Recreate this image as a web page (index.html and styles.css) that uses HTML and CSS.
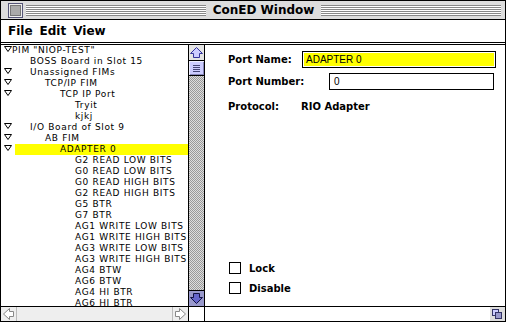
FILE: index.html
```html
<!DOCTYPE html>
<html>
<head>
<meta charset="utf-8">
<title>ConED Window</title>
<link rel="stylesheet" href="styles.css">
</head>
<body>
<div class="window">
  <div class="titlebar">
    <div class="closebox"><div class="closebox-in"></div></div>
    <div class="stripes"></div>
    <div class="title">ConED Window</div>
    <div class="stripes"></div>
  </div>
  <div class="menubar">
    <span class="menu">File</span><span class="menu">Edit</span><span class="menu">View</span>
  </div>
  <div class="main">
    <div class="left">
      <div class="tree-area">
        <div class="tree">
          <div class="row"><span class="tw"><svg width="8" height="6" viewBox="0 0 8 6"><path d="M0.5 0.5H7.5L4 5.5Z" fill="#fff" stroke="#000" stroke-width="1"/></svg></span><span class="lbl lv0">PIM "NIOP-TEST"</span></div>
          <div class="row"><span class="tw"></span><span class="lbl lv1">BOSS Board in Slot 15</span></div>
          <div class="row"><span class="tw"><svg width="8" height="6" viewBox="0 0 8 6"><path d="M0.5 0.5H7.5L4 5.5Z" fill="#fff" stroke="#000" stroke-width="1"/></svg></span><span class="lbl lv1">Unassigned FIMs</span></div>
          <div class="row"><span class="tw"><svg width="8" height="6" viewBox="0 0 8 6"><path d="M0.5 0.5H7.5L4 5.5Z" fill="#fff" stroke="#000" stroke-width="1"/></svg></span><span class="lbl lv2">TCP/IP FIM</span></div>
          <div class="row"><span class="tw"><svg width="8" height="6" viewBox="0 0 8 6"><path d="M0.5 0.5H7.5L4 5.5Z" fill="#fff" stroke="#000" stroke-width="1"/></svg></span><span class="lbl lv3">TCP IP Port</span></div>
          <div class="row"><span class="tw"></span><span class="lbl lv4">Tryit</span></div>
          <div class="row"><span class="tw"></span><span class="lbl lv4">kjkj</span></div>
          <div class="row"><span class="tw"><svg width="8" height="6" viewBox="0 0 8 6"><path d="M0.5 0.5H7.5L4 5.5Z" fill="#fff" stroke="#000" stroke-width="1"/></svg></span><span class="lbl lv1">I/O Board of Slot 9</span></div>
          <div class="row"><span class="tw"><svg width="8" height="6" viewBox="0 0 8 6"><path d="M0.5 0.5H7.5L4 5.5Z" fill="#fff" stroke="#000" stroke-width="1"/></svg></span><span class="lbl lv2">AB FIM</span></div>
          <div class="row"><span class="tw"><svg width="8" height="6" viewBox="0 0 8 6"><path d="M0.5 0.5H7.5L4 5.5Z" fill="#fff" stroke="#000" stroke-width="1"/></svg></span><span class="lbl lv3 sel">ADAPTER 0</span></div>
          <div class="row"><span class="tw"></span><span class="lbl lv4">G2 READ LOW BITS</span></div>
          <div class="row"><span class="tw"></span><span class="lbl lv4">G0 READ LOW BITS</span></div>
          <div class="row"><span class="tw"></span><span class="lbl lv4">G0 READ HIGH BITS</span></div>
          <div class="row"><span class="tw"></span><span class="lbl lv4">G2 READ HIGH BITS</span></div>
          <div class="row"><span class="tw"></span><span class="lbl lv4">G5 BTR</span></div>
          <div class="row"><span class="tw"></span><span class="lbl lv4">G7 BTR</span></div>
          <div class="row"><span class="tw"></span><span class="lbl lv4">AG1 WRITE LOW BITS</span></div>
          <div class="row"><span class="tw"></span><span class="lbl lv4">AG1 WRITE HIGH BITS</span></div>
          <div class="row"><span class="tw"></span><span class="lbl lv4">AG3 WRITE LOW BITS</span></div>
          <div class="row"><span class="tw"></span><span class="lbl lv4">AG3 WRITE HIGH BITS</span></div>
          <div class="row"><span class="tw"></span><span class="lbl lv4">AG4 BTW</span></div>
          <div class="row"><span class="tw"></span><span class="lbl lv4">AG6 BTW</span></div>
          <div class="row"><span class="tw"></span><span class="lbl lv4">AG4 HI BTR</span></div>
          <div class="row"><span class="tw"></span><span class="lbl lv4">AG6 HI BTR</span></div>
        </div>
        <div class="vscroll">
          <div class="sbtn up"><svg width="15" height="15" viewBox="0 0 15 15"><path d="M7.5 2.5L13.5 8.5H10.5V12.5H4.5V8.5H1.5Z" fill="#ccccff" stroke="#333399" stroke-width="1"/></svg></div>
          <div class="thumb"><div class="grip"></div></div>
          <div class="track"></div>
          <div class="sbtn down"><svg width="15" height="15" viewBox="0 0 15 15"><path d="M4.5 2.5H10.5V6.5H13.5L7.5 12.5L1.5 6.5H4.5Z" fill="#6666cc" stroke="#111144" stroke-width="1"/></svg></div>
        </div>
      </div>
      <div class="hscroll">
        <div class="hbtn lft"><svg width="15" height="14" viewBox="0 0 15 14"><path d="M2.5 7L8.5 1.5V4.5H12.5V9.5H8.5V12.5Z" fill="#fff" stroke="#888" stroke-width="1"/></svg></div>
        <div class="htrack"></div>
        <div class="hbtn rgt"><svg width="15" height="14" viewBox="0 0 15 14"><path d="M12.5 7L6.5 1.5V4.5H2.5V9.5H6.5V12.5Z" fill="#fff" stroke="#888" stroke-width="1"/></svg></div>
        <div class="corner"></div>
      </div>
    </div>
    <div class="right">
      <div class="form">
        <div class="frow">
          <span class="flabel w-name">Port Name:</span>
          <div class="field name"><span class="hl">ADAPTER 0</span></div>
        </div>
        <div class="frow">
          <span class="flabel w-num">Port Number:</span>
          <div class="field num"><span class="val">0</span></div>
        </div>
        <div class="frow proto">
          <span class="flabel w-proto">Protocol:</span>
          <span class="flabel">RIO Adapter</span>
        </div>
        <div class="checks">
          <label class="check"><span class="box"></span><span class="flabel">Lock</span></label>
          <label class="check"><span class="box"></span><span class="flabel">Disable</span></label>
        </div>
      </div>
      <div class="status">
        <div class="grow"><svg width="14" height="14" viewBox="0 0 14 14"><rect x="2.5" y="2.5" width="6" height="6" fill="#ccccff" stroke="#333366"/><rect x="5.5" y="5.5" width="6" height="6" fill="#9999cc" stroke="#333366"/></svg></div>
      </div>
    </div>
  </div>
</div>
</body>
</html>
```

FILE: styles.css
```css
html, body {
  margin: 0;
  padding: 0;
  background: #fff;
}

.window {
  width: 504px;
  border: 1px solid #000;
  font-family: "DejaVu Sans", sans-serif;
  color: #000;
}

.titlebar {
  height: 18px;
  background: #dddddd;
  border-bottom: 1px solid #000;
  display: flex;
  align-items: center;
  padding: 0 4px 0 7px;
}

.closebox {
  width: 11px;
  height: 11px;
  border: 1px solid #555577;
  background: #eeeeee;
  margin-right: 3px;
  display: flex;
  padding: 1px;
  box-sizing: content-box;
}

.closebox-in {
  flex: 1;
  background: #aaaaaa;
  border: 1px solid #777;
}

.stripes {
  flex: 1;
  height: 11px;
  background: repeating-linear-gradient(to bottom, #888 0 1px, #fff 1px 2px);
}

.title {
  font-weight: bold;
  font-size: 12px;
  padding: 0 7px;
  line-height: 18px;
}

.menubar {
  height: 22px;
  border-bottom: 3px double #000;
  display: flex;
  align-items: center;
  padding-left: 7px;
  gap: 7px;
  font-weight: bold;
  font-size: 12px;
}

.main {
  display: flex;
  height: 276px;
}

.left {
  width: 203px;
  border-right: 1px solid #000;
  display: flex;
  flex-direction: column;
}

.tree-area {
  height: 261px;
  display: flex;
}

.tree {
  width: 187px;
  overflow: hidden;
  font-size: 9px;
  letter-spacing: 0.65px;
}

.row {
  height: 11px;
  display: flex;
  white-space: nowrap;
  line-height: 11px;
}

.tw {
  width: 14px;
  flex: none;
  display: flex;
  padding-left: 3px;
  padding-top: 1px;
  box-sizing: border-box;
}

.lbl {
  flex: 1;
}

.lv0 { margin-left: -3px; }
.lv1 { padding-left: 15px; }
.lv2 { padding-left: 30px; }
.lv3 { padding-left: 45px; }
.lv4 { padding-left: 60px; }

.sel {
  background-color: #ffff00;
}

.vscroll {
  width: 15px;
  border-left: 1px solid #000;
  display: flex;
  flex-direction: column;
}

.sbtn {
  height: 15px;
  display: flex;
}

.sbtn.up {
  background: #e4e4e4;
  border-bottom: 1px solid #000;
}

.sbtn.down {
  background: #9999cc;
  border-top: 1px solid #000;
}

.thumb {
  height: 15px;
  background: #ccccff;
  border-bottom: 1px solid #000;
  box-sizing: border-box;
  display: flex;
  justify-content: center;
  align-items: center;
  box-shadow: inset 1px 1px 0 #eeeeff, inset -1px -1px 0 #8888bb;
}

.grip {
  width: 7px;
  height: 7px;
  background: repeating-linear-gradient(to bottom, #444477 0 1px, transparent 1px 2px);
}

.track {
  flex: 1;
  background-color: #dddddd;
  background-image: conic-gradient(#999 25%, transparent 0 50%, #999 0 75%, transparent 0);
  background-size: 2px 2px;
}

.hscroll {
  flex: 1;
  border-top: 1px solid #000;
  display: flex;
}

.hbtn {
  width: 15px;
  background: #eeeeee;
  display: flex;
  align-items: center;
}

.hbtn.lft { border-right: 1px solid #bbb; }
.hbtn.rgt { border-left: 1px solid #bbb; }

.htrack {
  flex: 1;
  background: #eeeeee;
}

.corner {
  width: 15px;
  border-left: 1px solid #000;
  background: #fff;
}

.right {
  flex: 1;
  display: flex;
  flex-direction: column;
}

.form {
  flex: 1;
  display: flex;
  flex-direction: column;
  padding: 6px 0 12px 23px;
}

.frow {
  display: flex;
  align-items: center;
  height: 17px;
  margin-bottom: 5px;
}

.frow.proto {
  margin-top: 3px;
}

.flabel {
  font-weight: bold;
  font-size: 10px;
  white-space: nowrap;
}

.w-name { width: 74px; }
.w-num { width: 101px; }
.w-proto { width: 73px; }

.field {
  height: 17px;
  border: 1px solid #000;
  box-sizing: border-box;
  display: flex;
  align-items: center;
  font-family: "Liberation Sans", sans-serif;
  font-size: 10px;
}

.field.name {
  width: 194px;
  padding: 1px;
}

.hl {
  flex: 1;
  align-self: stretch;
  background: #ffff00;
  padding-left: 2px;
  line-height: 13px;
}

.field.num {
  width: 165px;
  padding-left: 4px;
}

.checks {
  margin-top: auto;
  display: flex;
  flex-direction: column;
  gap: 8px;
}

.check {
  display: flex;
  align-items: center;
  height: 12px;
  gap: 8px;
  margin-left: 1px;
}

.box {
  width: 12px;
  height: 12px;
  border: 1px solid #000;
  box-sizing: border-box;
  background: #fff;
}

.status {
  height: 14px;
  border-top: 1px solid #000;
  display: flex;
  justify-content: flex-end;
}

.grow {
  width: 15px;
  background: #dddddd;
  display: flex;
}
```
